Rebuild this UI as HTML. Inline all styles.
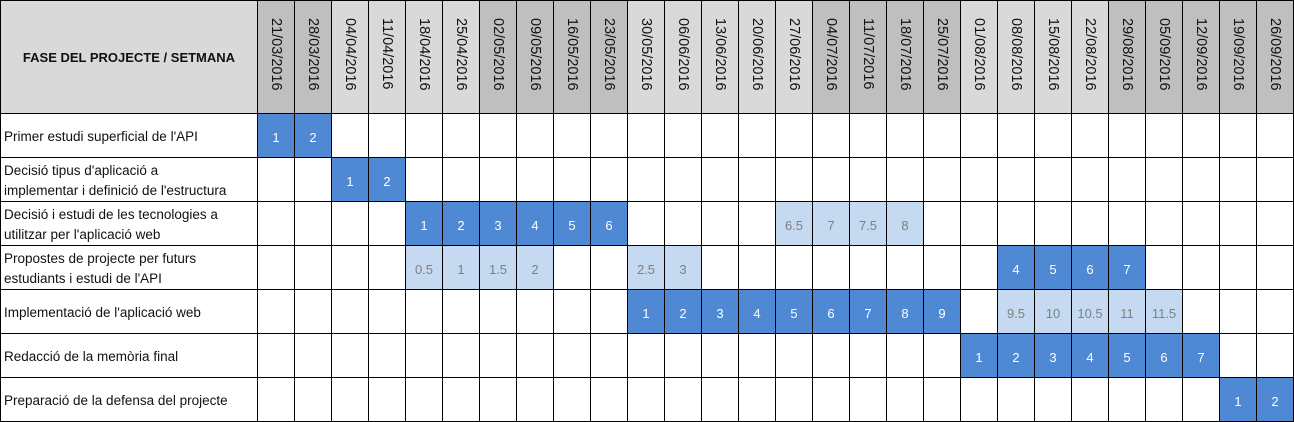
<!DOCTYPE html>
<html><head><meta charset="utf-8"><style>
html,body{margin:0;padding:0;background:#fff;width:1294px;height:422px;overflow:hidden}
.g{display:grid;grid-template-columns:256px repeat(28,36px);grid-template-rows:112px repeat(7,43px);gap:1px;padding:1px;background:#000;width:1292px;height:420px;font-family:"Liberation Sans",sans-serif}
.g>*{background:#fff;display:flex;align-items:center;justify-content:center;font-size:13px;color:#fff;font-style:normal;overflow:hidden}
.g>.n{justify-content:flex-start;color:#111;font-size:13.5px;line-height:20px;padding-left:3px;padding-top:3px;white-space:nowrap}
.t{background:#d9d9d9!important;font-weight:bold;color:#111!important;font-size:13px!important}
.v{background:#d9d9d9!important;color:#111!important}
.v.d{background:#bfbfbf!important}
.v span{writing-mode:vertical-rl;font-size:14.5px;margin-top:-6px}
.b{background:#4f88d3!important;padding-top:3px}
.l{background:#c5d9f1!important;color:#808080!important;padding-top:3px}
</style></head><body>
<div class="g">
<div class="t">FASE DEL PROJECTE / SETMANA</div>
<div class="v d"><span>21/03/2016</span></div><div class="v d"><span>28/03/2016</span></div>
<div class="v"><span>04/04/2016</span></div><div class="v"><span>11/04/2016</span></div><div class="v"><span>18/04/2016</span></div><div class="v"><span>25/04/2016</span></div>
<div class="v d"><span>02/05/2016</span></div><div class="v d"><span>09/05/2016</span></div><div class="v d"><span>16/05/2016</span></div><div class="v d"><span>23/05/2016</span></div>
<div class="v"><span>30/05/2016</span></div><div class="v"><span>06/06/2016</span></div><div class="v"><span>13/06/2016</span></div><div class="v"><span>20/06/2016</span></div><div class="v"><span>27/06/2016</span></div>
<div class="v d"><span>04/07/2016</span></div><div class="v d"><span>11/07/2016</span></div><div class="v d"><span>18/07/2016</span></div><div class="v d"><span>25/07/2016</span></div>
<div class="v"><span>01/08/2016</span></div><div class="v"><span>08/08/2016</span></div><div class="v"><span>15/08/2016</span></div><div class="v"><span>22/08/2016</span></div>
<div class="v d"><span>29/08/2016</span></div><div class="v d"><span>05/09/2016</span></div><div class="v d"><span>12/09/2016</span></div><div class="v d"><span>19/09/2016</span></div><div class="v d"><span>26/09/2016</span></div>

<div class="n">Primer estudi superficial de l'API</div><i class="b">1</i><i class="b">2</i><i></i><i></i><i></i><i></i><i></i><i></i><i></i><i></i><i></i><i></i><i></i><i></i><i></i><i></i><i></i><i></i><i></i><i></i><i></i><i></i><i></i><i></i><i></i><i></i><i></i><i></i>

<div class="n">Decisió tipus d'aplicació a<br>implementar i definició de l'estructura</div><i></i><i></i><i class="b">1</i><i class="b">2</i><i></i><i></i><i></i><i></i><i></i><i></i><i></i><i></i><i></i><i></i><i></i><i></i><i></i><i></i><i></i><i></i><i></i><i></i><i></i><i></i><i></i><i></i><i></i><i></i>

<div class="n">Decisió i estudi de les tecnologies a<br>utilitzar per l'aplicació web</div><i></i><i></i><i></i><i></i><i class="b">1</i><i class="b">2</i><i class="b">3</i><i class="b">4</i><i class="b">5</i><i class="b">6</i><i></i><i></i><i></i><i></i><i class="l">6.5</i><i class="l">7</i><i class="l">7.5</i><i class="l">8</i><i></i><i></i><i></i><i></i><i></i><i></i><i></i><i></i><i></i><i></i>

<div class="n">Propostes de projecte per futurs<br>estudiants i estudi de l'API</div><i></i><i></i><i></i><i></i><i class="l">0.5</i><i class="l">1</i><i class="l">1.5</i><i class="l">2</i><i></i><i></i><i class="l">2.5</i><i class="l">3</i><i></i><i></i><i></i><i></i><i></i><i></i><i></i><i></i><i class="b">4</i><i class="b">5</i><i class="b">6</i><i class="b">7</i><i></i><i></i><i></i><i></i>

<div class="n">Implementació de l'aplicació web</div><i></i><i></i><i></i><i></i><i></i><i></i><i></i><i></i><i></i><i></i><i class="b">1</i><i class="b">2</i><i class="b">3</i><i class="b">4</i><i class="b">5</i><i class="b">6</i><i class="b">7</i><i class="b">8</i><i class="b">9</i><i></i><i class="l">9.5</i><i class="l">10</i><i class="l">10.5</i><i class="l">11</i><i class="l">11.5</i><i></i><i></i><i></i>

<div class="n">Redacció de la memòria final</div><i></i><i></i><i></i><i></i><i></i><i></i><i></i><i></i><i></i><i></i><i></i><i></i><i></i><i></i><i></i><i></i><i></i><i></i><i></i><i class="b">1</i><i class="b">2</i><i class="b">3</i><i class="b">4</i><i class="b">5</i><i class="b">6</i><i class="b">7</i><i></i><i></i>

<div class="n">Preparació de la defensa del projecte</div><i></i><i></i><i></i><i></i><i></i><i></i><i></i><i></i><i></i><i></i><i></i><i></i><i></i><i></i><i></i><i></i><i></i><i></i><i></i><i></i><i></i><i></i><i></i><i></i><i></i><i></i><i class="b">1</i><i class="b">2</i>
</div>
</body></html>
